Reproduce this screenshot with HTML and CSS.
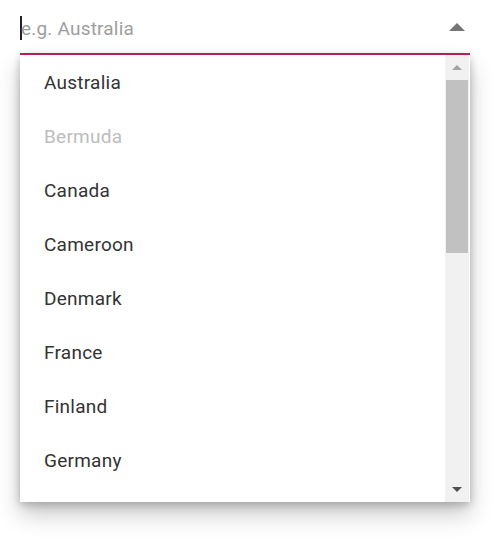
FILE: index.html
```html
<!DOCTYPE html>
<html lang="en">
<head>
    <meta charset="UTF-8">
    <meta name="viewport" content="width=device-width, initial-scale=1.0">
    <title>Countries</title>
    <link rel="stylesheet" href="styles.css">
</head>
<body>
    <div class="combo">
        <div class="combo-input">
            <span class="caret"></span>
            <span class="placeholder">e.g. Australia</span>
            <span class="arrow"></span>
        </div>
        <div class="popup">
            <ul class="list">
                <li>Australia</li>
                <li class="disabled">Bermuda</li>
                <li>Canada</li>
                <li>Cameroon</li>
                <li>Denmark</li>
                <li>France</li>
                <li>Finland</li>
                <li>Germany</li>
            </ul>
            <div class="scrollbar">
                <span class="sb-up"></span>
                <div class="track">
                    <div class="thumb"></div>
                </div>
                <span class="sb-down"></span>
            </div>
        </div>
    </div>
</body>
</html>
```

FILE: styles.css
```css
*{
    margin: 0;
    padding: 0;
    box-sizing: border-box;
}
body{
    background: #fff;
    font-family: Roboto, "Liberation Sans", sans-serif;
    padding: 0 34px 0 20px;
    min-height: 100vh;
}
.combo{
    width: 450px;
}
.combo-input{
    display: flex;
    align-items: center;
    height: 55px;
    padding-top: 3px;
    border-bottom: 2px solid #c9215a;
}
.caret{
    width: 2px;
    height: 24px;
    background: #222;
}
.placeholder{
    flex: 1;
    font-size: 19px;
    letter-spacing: .2px;
    color: #9e9e9e;
    margin-left: -1px;
}
.arrow{
    width: 0;
    height: 0;
    border-left: 8px solid transparent;
    border-right: 8px solid transparent;
    border-bottom: 8px solid #757575;
    margin-right: 5px;
    margin-top: -2px;
}
.popup{
    display: flex;
    height: 447px;
    background: #fff;
    box-shadow: 0 12px 22px rgba(0,0,0,.22), 0 4px 8px rgba(0,0,0,.14), 0 0 8px rgba(0,0,0,.1);
}
.list{
    flex: 1;
    list-style: none;
    overflow: hidden;
    padding-top: 1px;
}
.list li{
    height: 54px;
    line-height: 54px;
    padding-left: 24px;
    font-size: 19px;
    letter-spacing: .25px;
    color: #333;
}
.list li.disabled{
    color: #bdbdbd;
}
.scrollbar{
    width: 24px;
    margin-right: 1px;
    background: #f1f1f1;
    display: flex;
    flex-direction: column;
    align-items: center;
}
.sb-up, .sb-down{
    width: 0;
    height: 0;
    border-left: 5px solid transparent;
    border-right: 5px solid transparent;
}
.sb-up{
    margin-top: 10px;
    border-bottom: 5px solid #a3a3a3;
}
.sb-down{
    margin-bottom: 10px;
    border-top: 5px solid #505050;
}
.track{
    flex: 1;
    width: 100%;
    padding: 10px 1px;
}
.thumb{
    height: 173px;
    background: #c1c1c1;
}
```
